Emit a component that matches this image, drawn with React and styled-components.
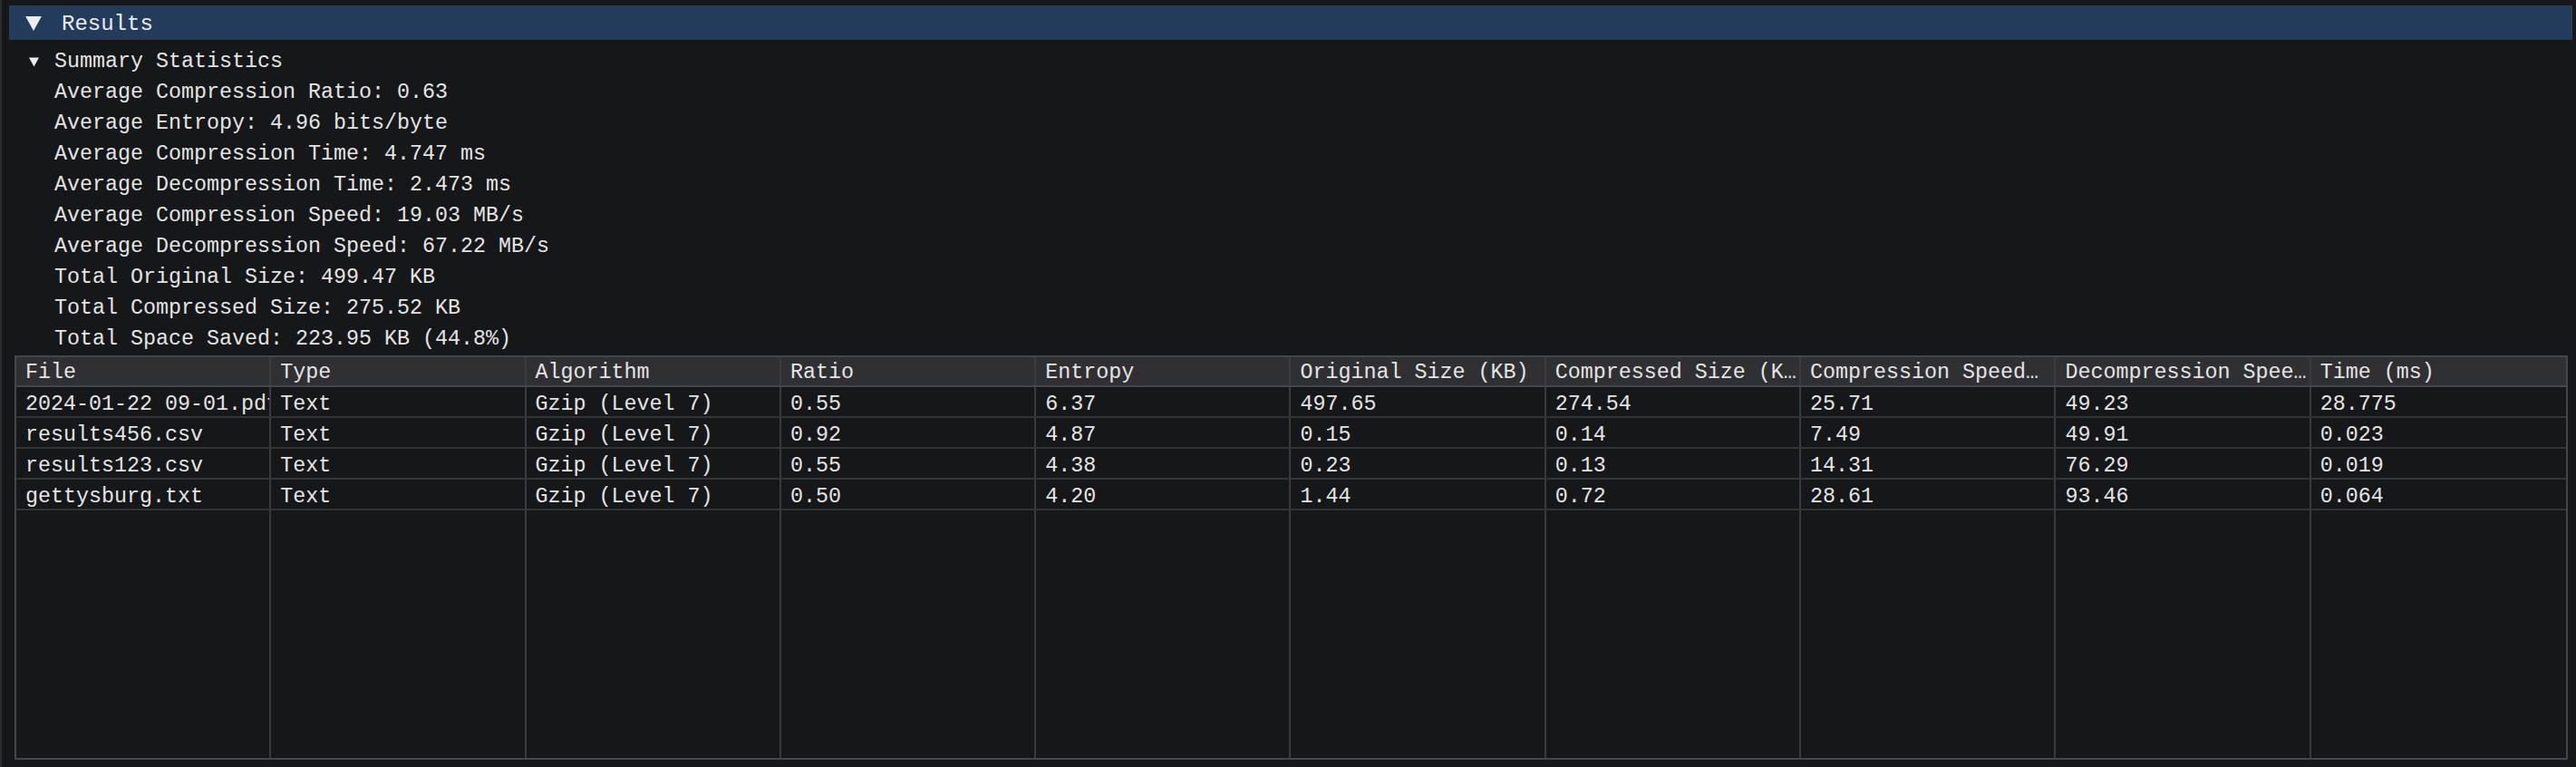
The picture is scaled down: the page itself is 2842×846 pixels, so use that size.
import styled, { createGlobalStyle } from "styled-components";

const GlobalStyle = createGlobalStyle`
  html, body {
    margin: 0;
    padding: 0;
    background: #161719;
  }
  * {
    box-sizing: border-box;
  }
`;

const Window = styled.div`
  width: 2842px;
  height: 846px;
  background: #161719;
  border-left: 2px solid #2b2b30;
  padding: 6px 4px 0 8px;
  display: flex;
  flex-direction: column;
  font-family: "Liberation Mono", "DejaVu Sans Mono", monospace;
  font-size: 23.33px;
  color: #e4e4e4;
  overflow: hidden;
`;

const CollapsingHeader = styled.div`
  height: 38px;
  background: #233c5b;
  display: flex;
  align-items: center;
  gap: 22px;
  padding: 2px 0 0 18px;
  font-size: 24px;
  color: #ececec;
`;

const Body = styled.div`
  padding: 7px 5px 0 6px;
  display: flex;
  flex-direction: column;
`;

const TreeNode = styled.div`
  height: 34px;
  display: flex;
  align-items: center;
  gap: 17px;
  padding-left: 16px;
`;

const StatList = styled.div`
  padding-left: 44px;
  display: flex;
  flex-direction: column;
`;

const StatLine = styled.div`
  height: 34px;
  line-height: 34px;
  white-space: pre;
`;

const Table = styled.div`
  margin-top: 1px;
  height: 446px;
  border: 2px solid #45454d;
  display: flex;
  flex-direction: column;
`;

const Row = styled.div`
  display: grid;
  grid-template-columns: repeat(10, 1fr);
  height: ${(p) => (p.$header ? 33 : 34)}px;
  background: ${(p) => (p.$header ? "#303033" : "#161719")};
  border-bottom: 2px solid ${(p) => (p.$header ? "#45454d" : "#333338")};
`;

const Filler = styled.div`
  flex: 1;
  display: grid;
  grid-template-columns: repeat(10, 1fr);
`;

const Cell = styled.div`
  min-width: 0;
  padding: ${(p) => (p.$header ? 3 : 6)}px 0 0 10px;
  display: flex;
  align-items: center;
  border-right: 2px solid #3a3a40;
  white-space: pre;
  overflow: hidden;

  &:last-child {
    border-right: none;
  }
`;

const Arrow = ({ w, h }) => (
  <svg width={w} height={h} viewBox="0 0 10 9" style={{ display: "block" }}>
    <polygon points="0,0 10,0 5,9" fill="#ececec" />
  </svg>
);

const stats = [
  "Average Compression Ratio: 0.63",
  "Average Entropy: 4.96 bits/byte",
  "Average Compression Time: 4.747 ms",
  "Average Decompression Time: 2.473 ms",
  "Average Compression Speed: 19.03 MB/s",
  "Average Decompression Speed: 67.22 MB/s",
  "Total Original Size: 499.47 KB",
  "Total Compressed Size: 275.52 KB",
  "Total Space Saved: 223.95 KB (44.8%)",
];

const columns = [
  "File",
  "Type",
  "Algorithm",
  "Ratio",
  "Entropy",
  "Original Size (KB)",
  "Compressed Size (KB)",
  "Compression Speed (MB/s)",
  "Decompression Speed (MB/s)",
  "Time (ms)",
];

const rows = [
  ["2024-01-22 09-01.pdf", "Text", "Gzip (Level 7)", "0.55", "6.37", "497.65", "274.54", "25.71", "49.23", "28.775"],
  ["results456.csv", "Text", "Gzip (Level 7)", "0.92", "4.87", "0.15", "0.14", "7.49", "49.91", "0.023"],
  ["results123.csv", "Text", "Gzip (Level 7)", "0.55", "4.38", "0.23", "0.13", "14.31", "76.29", "0.019"],
  ["gettysburg.txt", "Text", "Gzip (Level 7)", "0.50", "4.20", "1.44", "0.72", "28.61", "93.46", "0.064"],
];

// headers get cut like imgui does: trailing blanks dropped before the ellipsis
const MAX_HEADER_CHARS = 19;
const fitHeader = (label) =>
  label.length > MAX_HEADER_CHARS
    ? label.slice(0, MAX_HEADER_CHARS - 1).trimEnd() + "\u2026"
    : label;

const App = () => {
  return (
    <>
      <GlobalStyle />
      <Window>
        <CollapsingHeader>
          <Arrow w={18} h={16} />
          <span>Results</span>
        </CollapsingHeader>

        <Body>
          <TreeNode>
            <Arrow w={11} h={11} />
            <span>Summary Statistics</span>
          </TreeNode>
          <StatList>
            {stats.map((s) => (
              <StatLine key={s}>{s}</StatLine>
            ))}
          </StatList>

          <Table>
            <Row $header>
              {columns.map((c) => (
                <Cell $header key={c} title={c}>
                  {fitHeader(c)}
                </Cell>
              ))}
            </Row>
            {rows.map((r) => (
              <Row key={r[0]}>
                {r.map((v, i) => (
                  <Cell key={i}>{v}</Cell>
                ))}
              </Row>
            ))}
            <Filler>
              {columns.map((c) => (
                <Cell key={c} />
              ))}
            </Filler>
          </Table>
        </Body>
      </Window>
    </>
  );
};

export default App;
